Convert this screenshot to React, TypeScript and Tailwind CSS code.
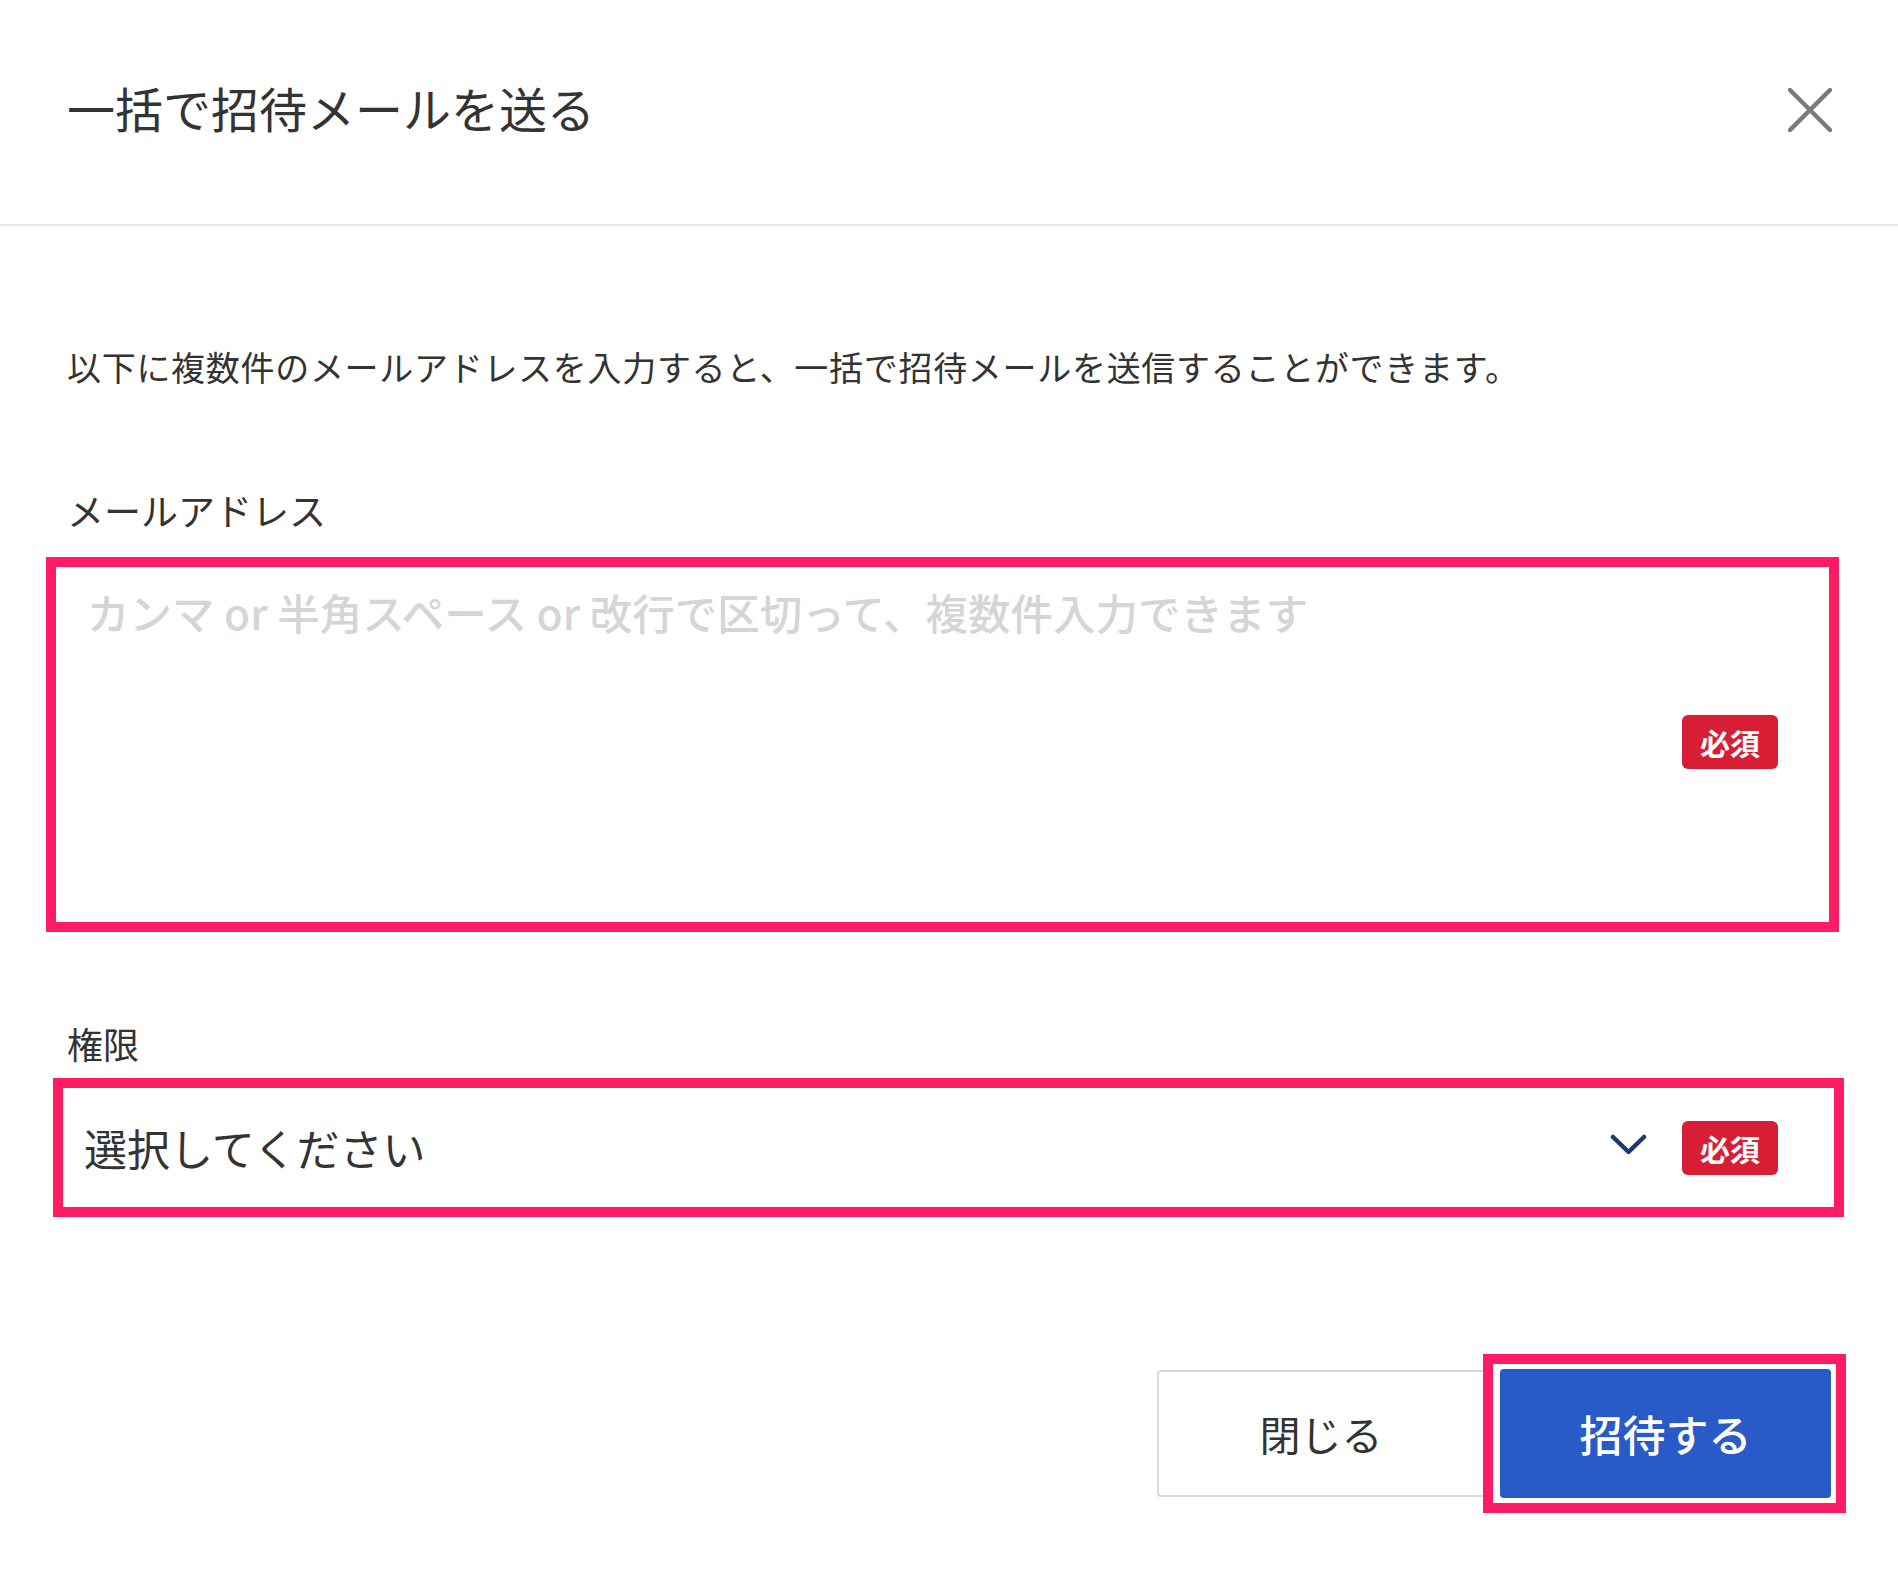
import React from "react";

const FONT = { fontFamily: '"Noto Sans CJK JP", "Noto Sans", sans-serif' };

function Badge() {
  return (
    <span className="flex h-[54px] w-[96px] shrink-0 items-center justify-center rounded-[6px] bg-[#d81e34] text-[30px] font-bold leading-none text-white">
      必須
    </span>
  );
}

export default function App() {
  return (
    <div className="min-h-[1570px] w-[1898px] bg-white text-[#333333]" style={FONT}>
      {/* Header */}
      <div className="flex h-[224px] items-center justify-between pb-[4px] pl-[67px] pr-[66px]">
        <h1 className="mb-[7px] text-[48px] font-normal leading-none text-[#333333]">一括で招待メールを送る</h1>
        <button className="flex h-[44px] w-[44px] items-center justify-center" aria-label="閉じる">
          <svg width="44" height="44" viewBox="0 0 44 44" fill="none">
            <path d="M2 2 L42 42 M42 2 L2 42" stroke="#7a7a7a" strokeWidth="4.5" strokeLinecap="round" />
          </svg>
        </button>
      </div>
      <div className="h-[2px] w-full bg-[#e3e7ec]" />

      {/* Body */}
      <p className="ml-[67px] mt-[124px] text-[34px] leading-[34px] tracking-[0.7px]">
        以下に複数件のメールアドレスを入力すると、一括で招待メールを送信することができます。
      </p>

      <div className="ml-[67px] mt-[108px] text-[37px] leading-[36px]">メールアドレス</div>

      <div className="ml-[46px] mr-[59px] mt-[29px] flex h-[375px] border-[10px] border-[#ff1c64] bg-white">
        <textarea
          className="h-full flex-1 resize-none bg-transparent pl-[31px] pt-[20px] text-[42.5px] font-medium leading-[49px] text-[#333333] outline-none placeholder:text-[#d7d4d4]"
          placeholder="カンマ or 半角スペース or 改行で区切って、複数件入力できます"
          style={FONT}
        />
        <div className="mr-[51px] flex items-center pb-[6px]">
          <Badge />
        </div>
      </div>

      <div className="ml-[67px] mt-[93px] text-[36px] leading-[36px]">権限</div>

      <div className="ml-[53px] mr-[54px] mt-[17px] flex h-[139px] items-center border-[10px] border-[#ff1c64] bg-white">
        <span className="flex-1 pl-[21px] text-[43px] leading-none text-[#333333]">選択してください</span>
        <svg width="37" height="22" viewBox="0 0 37 22" fill="none" className="mb-[6px]">
          <path d="M3 3 L18.5 18 L34 3" stroke="#1b3b6f" strokeWidth="4.5" strokeLinecap="round" strokeLinejoin="round" />
        </svg>
        <div className="ml-[35px] mr-[56px]">
          <Badge />
        </div>
      </div>

      {/* Footer */}
      <div className="mt-[137px] flex items-center justify-end pr-[52px]">
        <button className="flex h-[127px] w-[326px] items-center justify-center rounded-l-[4px] border-[2px] border-r-0 border-[#dadada] bg-white text-[41px] leading-none text-[#333333]">
          閉じる
        </button>
        <div className="border-[10px] border-[#ff1c64] bg-white py-[5px] pl-[7px] pr-[5px]">
          <button className="flex h-[129px] w-[331px] items-center justify-center rounded-[4px] bg-[#285ac8] text-[43px] font-medium leading-none text-white">
            招待する
          </button>
        </div>
      </div>
    </div>
  );
}
